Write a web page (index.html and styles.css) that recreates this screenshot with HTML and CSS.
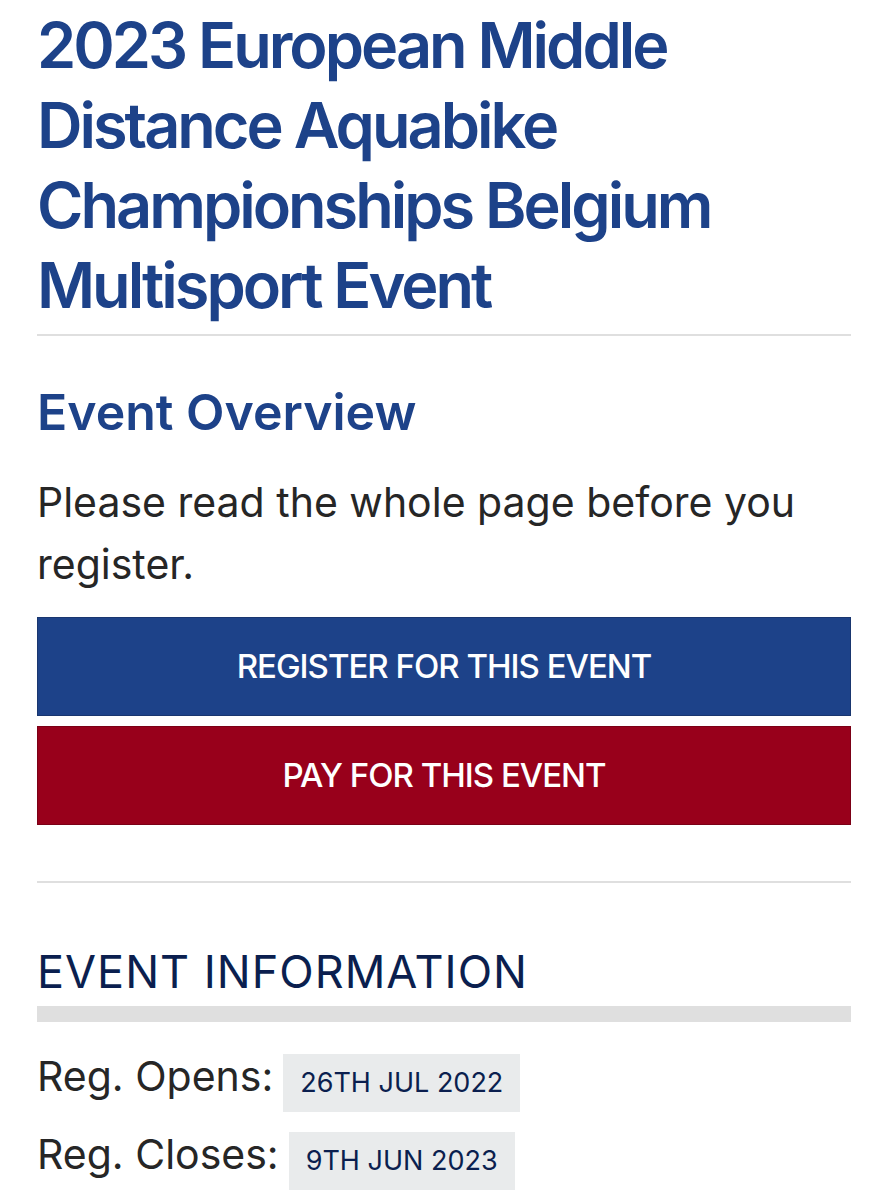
FILE: index.html
```
<!DOCTYPE html>
<html lang="en">
<head>
    <meta charset="UTF-8">
    <meta name="viewport" content="width=device-width, initial-scale=1.0">
    <title>2023 European Middle Distance Aquabike Championships</title>
    <link rel="stylesheet" href="styles.css">
</head>
<body>
    <main class="container">
        <h1>2023 European Middle Distance Aquabike Championships Belgium Multisport Event</h1>

        <section class="overview">
            <h2>Event Overview</h2>
            <p>Please read the whole page before you register.</p>
            <div class="actions">
                <a class="btn btn-register" href="#register">REGISTER FOR THIS EVENT</a>
                <a class="btn btn-pay" href="#pay">PAY FOR THIS EVENT</a>
            </div>
        </section>

        <section class="information">
            <h3>EVENT INFORMATION</h3>
            <dl class="dates">
                <div class="date-row">
                    <dt>Reg. Opens:</dt>
                    <dd>26TH JUL 2022</dd>
                </div>
                <div class="date-row">
                    <dt>Reg. Closes:</dt>
                    <dd>9TH JUN 2023</dd>
                </div>
            </dl>
        </section>
    </main>
</body>
</html>
```
FILE: styles.css
```
* {
    box-sizing: border-box;
}
body {
    font-family: Inter, 'Liberation Sans', sans-serif;
    margin: 0;
    background-color: #fff;
    color: #262626;
}
h1, h2, h3, p, dl, dd {
    margin: 0;
}
.container {
    padding: 5px 37px 10px;
}
h1 {
    padding-bottom: 9px;
    border-bottom: 2px solid #dfdfdf;
    color: #1d4289;
    font-size: 63px;
    font-weight: 600;
    line-height: 80px;
    letter-spacing: -3px;
}
.overview {
    padding: 44px 0 56px;
    border-bottom: 2px solid #dfdfdf;
}
h2 {
    color: #1d4289;
    font-size: 50px;
    font-weight: 600;
    line-height: 64px;
}
.overview p {
    margin: 27px 0 22px;
    font-size: 41px;
    line-height: 62px;
}
.actions {
    display: flex;
    flex-direction: column;
    gap: 10px;
}
.btn {
    padding: 24px 16px;
    border: 1px solid;
    color: #fff;
    font-size: 33px;
    font-weight: 500;
    line-height: 49px;
    letter-spacing: -1px;
    text-align: center;
    text-decoration: none;
}
.btn-register {
    background-color: #1d4289;
    border-color: #19366f;
}
.btn-pay {
    background-color: #98001b;
    border-color: #7b0016;
}
.information {
    padding-top: 60px;
}
h3 {
    padding-bottom: 5px;
    border-bottom: 16px solid #dfdfdf;
    color: #0b1f4f;
    font-size: 45px;
    font-weight: 400;
    line-height: 58px;
    letter-spacing: 1px;
}
.dates {
    display: flex;
    flex-direction: column;
    gap: 20px;
    padding-top: 32px;
}
.date-row {
    display: flex;
    align-items: flex-start;
    gap: 10px;
}
dt {
    font-size: 41px;
    line-height: 44px;
}
dd {
    padding: 0 17px;
    background-color: #e9ebec;
    color: #0b1f4f;
    font-size: 27px;
    line-height: 58px;
}
```
